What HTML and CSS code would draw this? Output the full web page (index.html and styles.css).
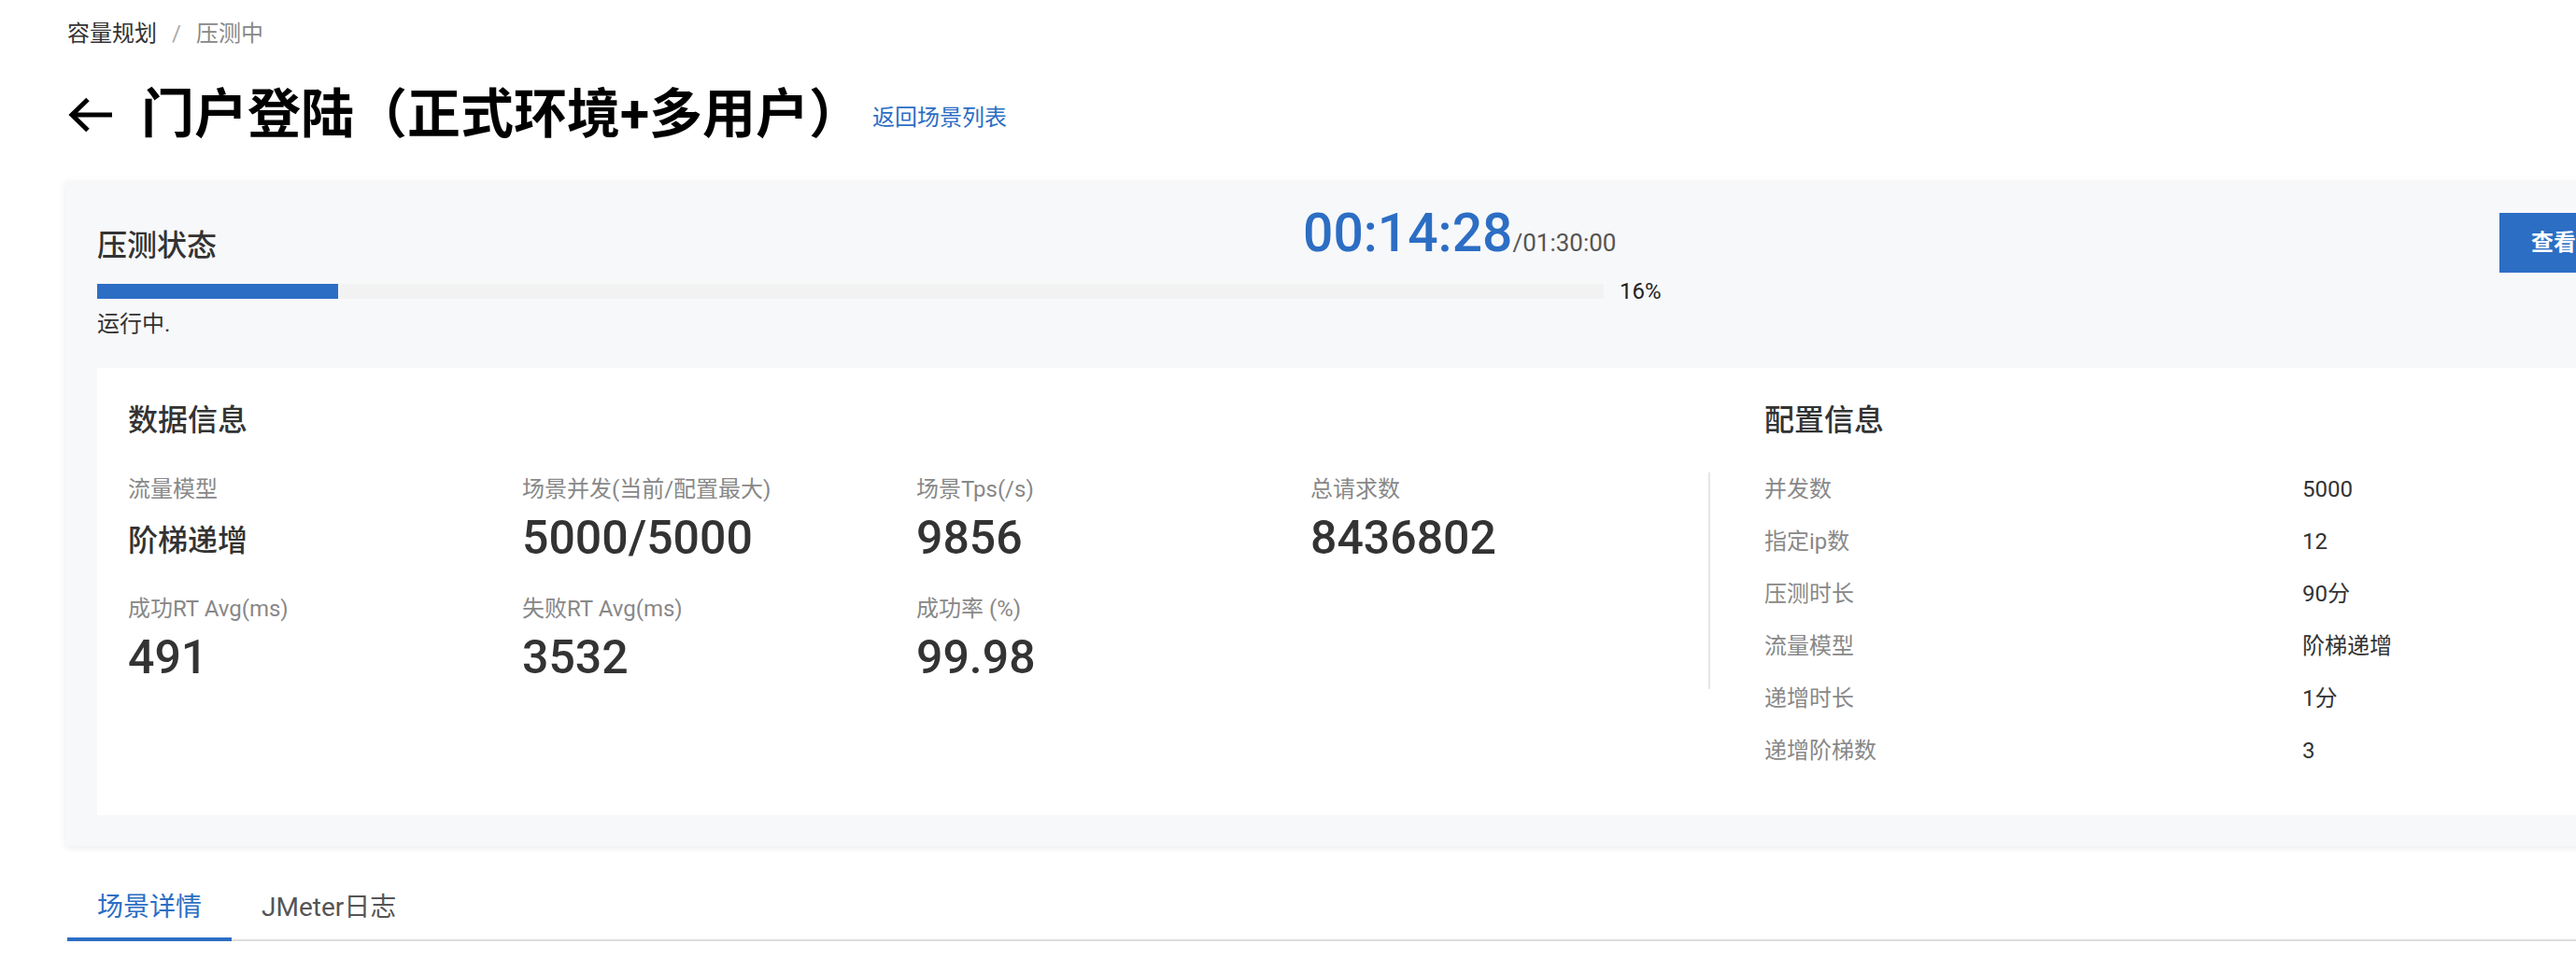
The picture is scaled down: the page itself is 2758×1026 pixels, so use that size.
FILE: index.html
```html
<!DOCTYPE html>
<html lang="zh-CN">
<head>
<meta charset="utf-8">
<title>压测中</title>
<link rel="stylesheet" href="styles.css">
</head>
<body>
<div class="page">
  <div class="breadcrumb">
    <span class="crumb">容量规划</span><span class="sep">/</span><span class="crumb current">压测中</span>
  </div>

  <div class="title-row">
    <svg class="back" width="47" height="38" viewBox="0 0 47 38" aria-hidden="true">
      <path d="M21 2.5 L4 19 L21 35.5 M4 19 H47" fill="none" stroke="#000" stroke-width="5"/>
    </svg>
    <h1 class="title">门户登陆（正式环境+多用户）</h1>
    <a class="back-link" href="#">返回场景列表</a>
  </div>

  <section class="card">
    <div class="status-head">
      <div class="status-title">压测状态</div>
      <div class="timer">00:14:28<span class="timer-total">/01:30:00</span></div>
      <button class="btn">查看报告</button>
    </div>
    <div class="progress-row">
      <div class="track"><div class="fill" style="width:16%"></div></div>
      <span class="pct">16%</span>
    </div>
    <div class="status-text">运行中.</div>

    <div class="panel">
      <div class="data">
        <h3 class="section-title">数据信息</h3>
        <div class="grid">
          <div class="stat"><div class="label">流量模型</div><div class="value text">阶梯递增</div></div>
          <div class="stat"><div class="label">场景并发(当前/配置最大)</div><div class="value">5000/5000</div></div>
          <div class="stat"><div class="label">场景Tps(/s)</div><div class="value">9856</div></div>
          <div class="stat"><div class="label">总请求数</div><div class="value">8436802</div></div>
          <div class="stat"><div class="label">成功RT Avg(ms)</div><div class="value">491</div></div>
          <div class="stat"><div class="label">失败RT Avg(ms)</div><div class="value">3532</div></div>
          <div class="stat"><div class="label">成功率 (%)</div><div class="value">99.98</div></div>
          <div class="stat"></div>
        </div>
      </div>
      <div class="config">
        <h3 class="section-title">配置信息</h3>
        <div class="row"><span class="k">并发数</span><span class="v">5000</span></div>
        <div class="row"><span class="k">指定ip数</span><span class="v">12</span></div>
        <div class="row"><span class="k">压测时长</span><span class="v">90分</span></div>
        <div class="row"><span class="k">流量模型</span><span class="v">阶梯递增</span></div>
        <div class="row"><span class="k">递增时长</span><span class="v">1分</span></div>
        <div class="row"><span class="k">递增阶梯数</span><span class="v">3</span></div>
      </div>
    </div>
  </section>

  <div class="tabs">
    <div class="tab active">场景详情</div>
    <div class="tab">JMeter日志</div>
  </div>
</div>
</body>
</html>
```

FILE: styles.css
```css
html, body {
  margin: 0;
  padding: 0;
  overflow: hidden;
  background: #fff;
}
body {
  font-family: Roboto, "Noto Sans CJK SC", sans-serif;
  color: #333;
}
.page {
  width: 2804px;
  padding: 18px 0 0 70px;
}
.breadcrumb {
  margin-left: 2px;
  font-size: 24px;
  line-height: 36px;
  color: #333;
}
.breadcrumb .sep {
  margin: 0 16px;
  color: #aaa;
}
.breadcrumb .current {
  color: #888;
}
.title-row {
  display: flex;
  align-items: center;
  height: 80px;
  margin-top: 29px;
  margin-left: 3px;
}
.back {
  display: block;
  margin-right: 31px;
}
.title {
  margin: 0;
  font-size: 57px;
  line-height: 80px;
  font-weight: 700;
  color: #000;
}
.back-link {
  margin-left: 11px;
  font-size: 24px;
  color: #2c6ec4;
  text-decoration: none;
}
.card {
  margin-top: 31px;
  background: #f7f8fa;
  padding: 34px 34px 33px;
  box-shadow: 0 2px 8px rgba(0, 0, 0, 0.08);
}
.status-head {
  display: flex;
  align-items: center;
  height: 64px;
}
.status-title {
  width: 1291px;
  font-size: 32px;
  font-weight: 500;
  color: #333;
}
.timer {
  align-self: flex-start;
  font-size: 57px;
  line-height: 44px;
  font-weight: 500;
  color: #2c6ec4;
}
.timer-total {
  font-size: 26px;
  font-weight: 400;
  color: #555;
}
.btn {
  margin-left: auto;
  height: 64px;
  padding: 0 34px;
  border: 0;
  background: #2c6ec4;
  color: #fff;
  font-family: Roboto, "Noto Sans CJK SC", sans-serif;
  font-size: 24px;
  font-weight: 700;
  line-height: 64px;
}
.progress-row {
  display: flex;
  align-items: center;
  height: 24px;
  margin-top: 8px;
}
.track {
  width: 1613px;
  height: 16px;
  background: #f2f2f2;
}
.fill {
  height: 100%;
  background: #2c6ec4;
}
.pct {
  margin-left: 17px;
  font-size: 24px;
  line-height: 24px;
  color: #222;
}
.status-text {
  margin-top: 5px;
  font-size: 24px;
  line-height: 36px;
  color: #333;
}
.panel {
  display: flex;
  margin-top: 29px;
  background: #fff;
  padding: 32px 33px 31px;
}
.section-title {
  margin: 0 0 32px;
  font-size: 32px;
  line-height: 48px;
  font-weight: 500;
  color: #333;
}
.grid {
  display: grid;
  grid-template-columns: 422px 422px 422px 426px;
  row-gap: 24px;
  border-right: 2px solid #e6e6e6;
}
.label {
  font-size: 24px;
  line-height: 36px;
  color: #888;
}
.value {
  font-size: 50px;
  line-height: 68px;
  font-weight: 500;
  color: #333;
}
.value.text {
  font-size: 32px;
  line-height: 62px;
  padding-top: 6px;
}
.config {
  padding-left: 58px;
}
.row {
  display: grid;
  grid-template-columns: 576px auto;
  font-size: 24px;
  line-height: 36px;
  margin-bottom: 20px;
}
.row .k {
  color: #888;
}
.row .v {
  color: #333;
}
.tabs {
  display: flex;
  margin-top: 46px;
  margin-left: 2px;
  border-bottom: 2px solid #ddd;
}
.tab {
  padding: 0 32px 12px;
  font-size: 28px;
  line-height: 40px;
  color: #555;
  border-bottom: 4px solid transparent;
  margin-bottom: -2px;
}
.tab.active {
  color: #2c6ec4;
  border-bottom-color: #2c6ec4;
}
```
